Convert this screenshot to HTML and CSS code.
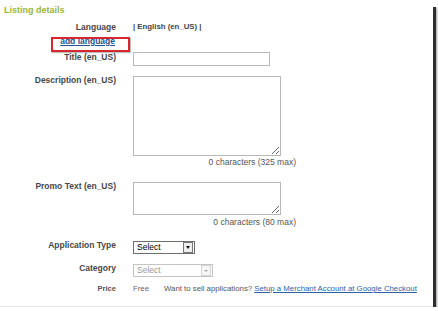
FILE: index.html
```html
<!DOCTYPE html>
<html>
<head>
<meta charset="utf-8">
<link rel="stylesheet" href="styles.css">
</head>
<body>
<div class="frame">
  <div class="heading">Listing details</div>

  <div class="row r-lang">
    <div class="label">Language</div>
    <div class="value lang">| English (en_US) |</div>
  </div>
  <div class="row r-add">
    <div class="label"><a class="add" href="#">add language</a></div>
  </div>

  <div class="row r-title">
    <div class="label">Title (en_US)</div>
    <div class="value"><input class="text" type="text"></div>
  </div>

  <div class="row r-desc">
    <div class="label">Description (en_US)</div>
    <div class="value"><textarea class="area big"></textarea></div>
  </div>
  <div class="row r-count1">
    <div class="label"></div>
    <div class="counter">0 characters (325 max)</div>
  </div>

  <div class="row r-promo">
    <div class="label">Promo Text (en_US)</div>
    <div class="value"><textarea class="area small"></textarea></div>
  </div>
  <div class="row r-count2">
    <div class="label"></div>
    <div class="counter">0 characters (80 max)</div>
  </div>

  <div class="row r-type">
    <div class="label">Application Type</div>
    <div class="value">
      <div class="sel sel-on">
        <span class="sel-text">Select</span>
        <span class="sel-btn"><span class="tri"></span></span>
      </div>
    </div>
  </div>

  <div class="row r-cat">
    <div class="label">Category</div>
    <div class="value">
      <div class="sel sel-off">
        <span class="sel-text">Select</span>
        <span class="sel-btn"><span class="tri"></span></span>
      </div>
    </div>
  </div>

  <div class="row r-price">
    <div class="label price-label">Price</div>
    <div class="value price">
      <span class="free">Free</span>
      <span class="want">Want to sell applications? <a href="#" class="merchant">Setup a Merchant Account at Google Checkout</a></span>
    </div>
  </div>

  <div class="callout"></div>
</div>
</body>
</html>
```

FILE: styles.css
```css
html, body {
  margin: 0;
  padding: 0;
  background: #ffffff;
}

body {
  font-family: "Liberation Sans", Arial, sans-serif;
  color: #444;
}

.frame {
  position: relative;
  width: 433px;
  height: 303px;
  background: #fff;
  border-bottom: 1px solid #e6e6e6;
  box-sizing: border-box;
  box-shadow: 3px 3px 0 #2f2f2f, 4px 4px 2px #9a9a9a;
  overflow: visible;
}

.heading {
  margin: 4px 0 0 4px;
  font-size: 9px;
  line-height: 12px;
  font-weight: bold;
  color: #97b63a;
}

.row {
  display: flex;
  align-items: flex-start;
}

.label {
  width: 116px;
  flex: none;
  margin-right: 17px;
  text-align: right;
  font-size: 8.5px;
  line-height: 12px;
  font-weight: bold;
  color: #474747;
  white-space: nowrap;
}

.value {
  font-size: 8.5px;
  line-height: 12px;
}

.r-lang { margin-top: 5px; }
.lang {
  font-weight: bold;
  font-size: 7.8px;
  color: #444;
}

.r-add { margin-top: 2px; }
.add {
  color: #25538f;
  text-decoration: underline;
  padding-right: 1px;
}

.r-title { margin-top: 4px; }
.text {
  display: block;
  margin: 1px 0 0 0;
  width: 137px;
  height: 14px;
  box-sizing: border-box;
  border: 1px solid #b8b8b8;
  padding: 0 2px;
  font-size: 8px;
}

.r-desc { margin-top: 8px; }
.area {
  display: block;
  margin: 2px 0 0 0;
  width: 148px;
  box-sizing: border-box;
  border: 1px solid #b8b8b8;
  padding: 2px;
  font-size: 8px;
  font-family: "Liberation Sans", Arial, sans-serif;
}
.area.big { height: 80px; }
.area.small { height: 33px; }

.counter {
  width: 163px;
  text-align: right;
  font-size: 8.5px;
  line-height: 12px;
  color: #555;
}

.r-count1 { margin-top: 0; }
.r-promo { margin-top: 12px; }
.r-count2 { margin-top: 1px; }

.r-type { margin-top: 11px; }
.r-cat { margin-top: 8px; }

.sel {
  display: flex;
  align-items: stretch;
  margin-top: 2px;
  height: 13px;
  box-sizing: border-box;
  background: #fff;
}
.sel-text {
  flex: 1;
  padding-left: 3px;
  font-size: 8.5px;
  line-height: 11px;
}
.sel-btn {
  display: flex;
  align-items: center;
  justify-content: center;
  width: 10px;
  margin: 0 1px 0 0;
  box-sizing: border-box;
}
.tri {
  width: 0;
  height: 0;
  border-left: 2.5px solid transparent;
  border-right: 2.5px solid transparent;
  border-top: 3px solid #111;
}

.sel-on {
  width: 62px;
  border: 1px solid #6e6e6e;
}
.sel-on .sel-text {
  color: #000;
}
.sel-on .sel-btn {
  border: 1px solid #777;
  background: #efefef;
}

.sel-off {
  width: 80px;
  border: 1px solid #c4c4c4;
}
.sel-off .sel-text {
  color: #9a9a9a;
}
.sel-off .sel-btn {
  border: 1px solid #d4d4d4;
  background: #f6f6f6;
}
.sel-off .tri {
  border-top-color: #aaa;
  border-left-width: 2px;
  border-right-width: 2px;
  border-top-width: 2px;
}

.r-price { margin-top: 6px; }
.price-label {
  font-size: 7.6px;
  color: #555;
}
.price {
  display: flex;
  font-size: 7.8px;
  color: #666;
  white-space: nowrap;
}
.free {
  width: 31px;
}
.want {
  color: #555;
}
.merchant {
  color: #2b62a8;
  text-decoration: underline;
}

.callout {
  position: absolute;
  left: 51px;
  top: 33px;
  width: 79px;
  height: 15px;
  box-sizing: border-box;
  border: 2px solid #d8272e;
  box-shadow: 1px 1px 1px rgba(0,0,0,0.25);
}
```
